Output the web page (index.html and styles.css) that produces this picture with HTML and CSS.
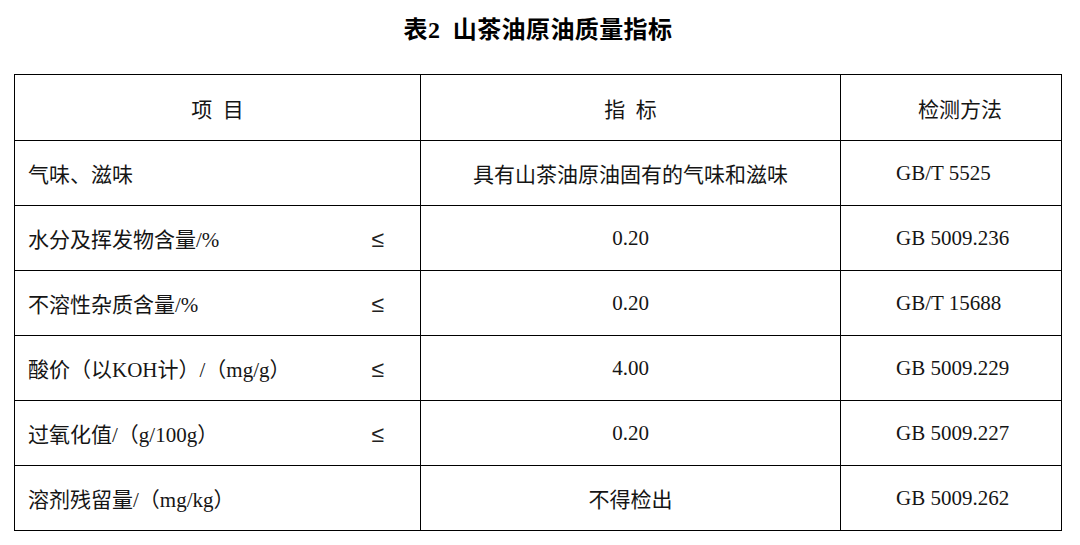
FILE: index.html
```html
<!DOCTYPE html>
<html lang="zh-CN">
<head>
<meta charset="utf-8">
<title>表2 山茶油原油质量指标</title>
<link rel="stylesheet" href="styles.css">
</head>
<body>
<div class="page">
  <h1 class="title">表2&ensp;山茶油原油质量指标</h1>
  <table class="spec">
    <colgroup>
      <col class="c1">
      <col class="c2">
      <col class="c3">
    </colgroup>
    <thead>
      <tr class="head">
        <th class="h1">项&ensp;目</th>
        <th class="h2">指&ensp;标</th>
        <th class="h3">检测方法</th>
      </tr>
    </thead>
    <tbody>
      <tr>
        <td class="item"><div class="cell"><span>气味、滋味</span></div></td>
        <td class="val">具有山茶油原油固有的气味和滋味</td>
        <td class="method">GB/T 5525</td>
      </tr>
      <tr>
        <td class="item"><div class="cell"><span>水分及挥发物含量/%</span><span class="le">≤</span></div></td>
        <td class="val">0.20</td>
        <td class="method">GB 5009.236</td>
      </tr>
      <tr>
        <td class="item"><div class="cell"><span>不溶性杂质含量/%</span><span class="le">≤</span></div></td>
        <td class="val">0.20</td>
        <td class="method">GB/T 15688</td>
      </tr>
      <tr>
        <td class="item"><div class="cell"><span>酸价（以KOH计）/（mg/g）</span><span class="le">≤</span></div></td>
        <td class="val">4.00</td>
        <td class="method">GB 5009.229</td>
      </tr>
      <tr>
        <td class="item"><div class="cell"><span>过氧化值/（g/100g）</span><span class="le">≤</span></div></td>
        <td class="val">0.20</td>
        <td class="method">GB 5009.227</td>
      </tr>
      <tr>
        <td class="item"><div class="cell"><span>溶剂残留量/（mg/kg）</span></div></td>
        <td class="val">不得检出</td>
        <td class="method">GB 5009.262</td>
      </tr>
    </tbody>
  </table>
</div>
</body>
</html>
```

FILE: styles.css
```css
html, body {
  margin: 0;
  padding: 0;
  background: #ffffff;
}

body {
  font-family: "Liberation Serif", "Noto Sans CJK SC", serif;
  color: #151515;
}

.page {
  width: 1080px;
  height: 545px;
  padding: 14px 0 0 14px;
  box-sizing: border-box;
}

.title {
  margin: 0 0 28px 0;
  width: 1048px;
  height: 32px;
  line-height: 32px;
  text-align: center;
  font-size: 24px;
  font-weight: bold;
  font-family: "Liberation Serif", "Noto Sans CJK SC", sans-serif;
  color: #000000;
  letter-spacing: 0.4px;
}

.spec {
  border-collapse: collapse;
  table-layout: fixed;
  width: 1047px;
  font-size: 21px;
}

.c1 { width: 406px; }
.c2 { width: 420px; }
.c3 { width: 221px; }

.spec th,
.spec td {
  border: 1px solid #000000;
  padding: 0;
  vertical-align: middle;
  font-weight: normal;
  white-space: nowrap;
}

.head {
  height: 66px;
}

.spec tbody tr {
  height: 65px;
}

.h1, .h2 {
  text-align: center;
}

.h1 {
  padding-left: 2px;
}

.h3 {
  text-align: left;
  padding-left: 77px !important;
}

.item {
  padding-left: 13px !important;
  padding-right: 36px !important;
}

.cell {
  display: flex;
  justify-content: space-between;
  align-items: center;
}

.le {
  font-family: "DejaVu Sans", sans-serif;
  font-size: 23px;
  font-weight: 200;
  line-height: 1;
  color: #222222;
  padding-top: 2px;
}

.val {
  text-align: center;
}

.method {
  text-align: left;
  padding-left: 55px !important;
}
```
